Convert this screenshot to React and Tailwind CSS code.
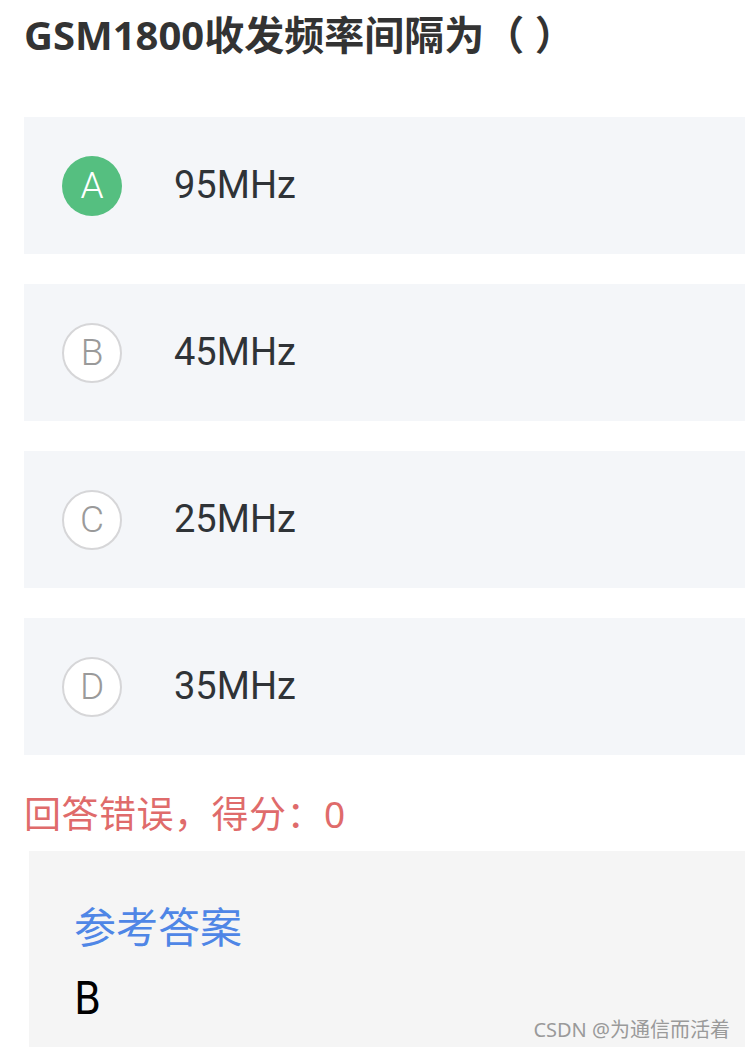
const options = [
  { key: 'A', text: '95MHz', selected: true },
  { key: 'B', text: '45MHz' },
  { key: 'C', text: '25MHz' },
  { key: 'D', text: '35MHz' },
];

const font = { fontFamily: '"Noto Sans", "Noto Sans CJK SC", sans-serif' };
const roboto = { fontFamily: 'Roboto, "Noto Sans CJK SC", sans-serif' };

function Option({ item }) {
  return (
    <div className="flex h-[137px] items-center bg-[#f4f6f9] pl-[38px]">
      {item.selected ? (
        <div
          className="flex h-[60px] w-[60px] items-center justify-center rounded-full bg-[#55bf80] text-[37px] font-light text-white"
          style={roboto}
        >
          {item.key}
        </div>
      ) : (
        <div
          className="flex h-[60px] w-[60px] items-center justify-center rounded-full border-2 border-[#d6d6d8] bg-white text-[37px] font-light text-[#9a9a9a]"
          style={roboto}
        >
          {item.key}
        </div>
      )}
      <span className="ml-[52px] text-[38px] text-[#2f3337]" style={roboto}>
        {item.text}
      </span>
    </div>
  );
}

export default function App() {
  return (
    <div className="h-[1047px] w-[745px] overflow-hidden bg-white" style={font}>
      <h1 className="pl-[24px] pt-[10px] text-[40px] font-bold leading-[50px] text-[#333333]">
        GSM1800收发频率间隔为（ ）
      </h1>

      <div className="ml-[24px] mt-[57px] flex flex-col gap-[30px]">
        {options.map((o) => (
          <Option key={o.key} item={o} />
        ))}
      </div>

      <div className="pl-[24px] pt-[34px] text-[37px] leading-[50px] tracking-[0.5px] text-[#df6b6b]">
        回答错误，得分：0
      </div>

      <div className="relative ml-[29px] mt-[12px] h-[200px] bg-[#f5f5f5] pl-[45px] pt-[48px]">
        <div className="text-[42px] leading-[56px] text-[#4f86e6]">参考答案</div>
        <div
          className="mt-[22px] text-[44px] leading-[44px] text-black"
          style={{ fontFamily: '"Liberation Sans Narrow", "DejaVu Sans Condensed", sans-serif' }}
        >
          B
        </div>
        <div className="absolute bottom-[6px] right-[15px] text-[20px] text-[#9a9a9a]">
          CSDN @为通信而活着
        </div>
      </div>
    </div>
  );
}
